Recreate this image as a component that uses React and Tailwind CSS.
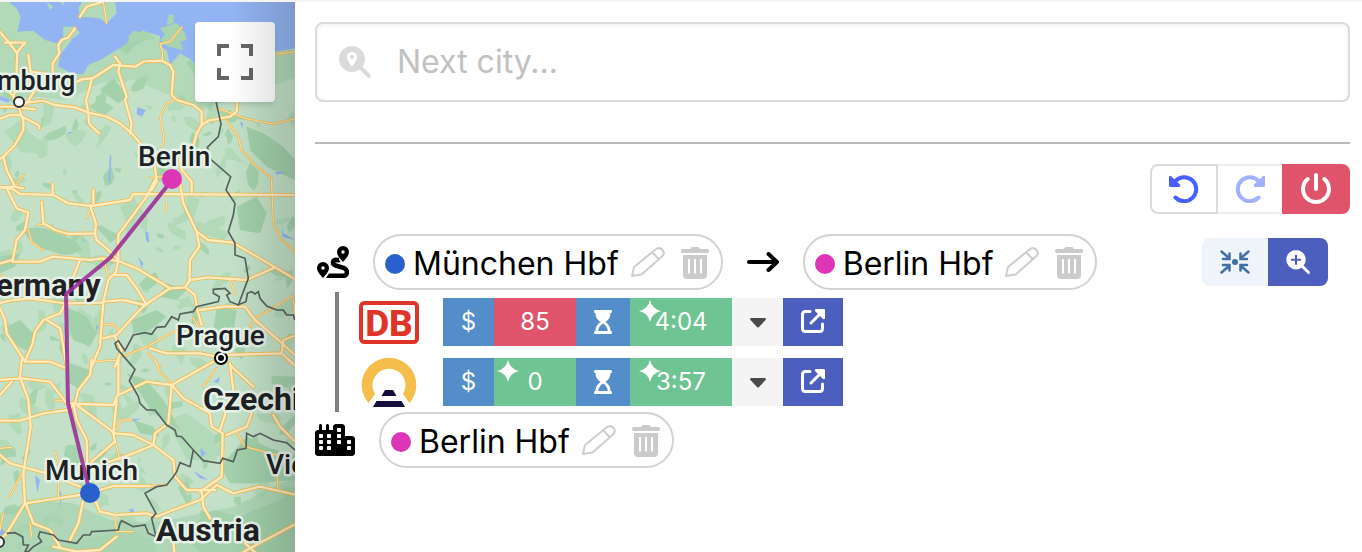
import React from 'react';
import { FaCity, FaPowerOff, FaMagnifyingGlassLocation } from 'react-icons/fa6';

const ROADS = [
  {
    y: 0,
    major: [
      'M-5 90 L25 125 50 158 75 128 15 128', 'M52 158 L50 200 50 260 40 290 57 320', 'M-5 250 L20 265 57 310',
      'M85 165 L92 215 140 222', 'M158 215 L158 190 178 160 175 135 185 120 205 112 225 85',
      'M110 262 L80 310 57 320', 'M-5 320 L30 320 105 328', 'M-5 358 L30 345 57 345 115 375 118 385',
      'M57 325 L70 360 70 390 45 435 10 470 -5 480', 'M10 470 L20 510 45 560',
      'M57 310 L130 302 165 315 225 322 265 338 320 350 360 370 395 400 430 440 465 500 470 545 455 570',
      'M225 248 L245 238 280 234 340 195 405 200 430 185 485 182 510 195 520 215 515 285 530 300 580 315 605 335 605 370',
      'M275 235 L270 260 258 300 265 340 268 372 297 400',
      'M345 170 L360 190 355 215 380 290 375 300 395 370 390 400',
      'M605 375 L590 400 580 440 540 480 545 510 575 545 575 575', 'M605 375 L625 362 690 350 710 335 712 305',
      'M240 50 L260 20 310 5', 'M-5 562 L40 560 70 565',
    ],
    minor: [
      'M520 300 L500 310 480 350 492 410 488 440', 'M487 182 L488 155 480 132 510 125 545 82', 'M655 325 L735 355 820 372 890 355',
      'M680 360 L715 410 725 450 760 490 815 535 815 570', 'M310 5 L320 70', 'M830 162 L890 155', 'M45 560 L72 525', 'M450 532 L490 530',
    ],
  },
  {
    y: 540,
    major: [
      'M-5 20 L40 28 60 42 160 45 205 70 275 78 390 60 400 42 885 45', 'M158 12 L158 45',
      'M20 25 L50 85 85 98 75 150 50 180 38 240 0 250', 'M38 245 L120 245 158 230 270 240 310 235 360 245 410 265 510 325 555 322 570 300 625 292 740 300 825 262',
      'M125 65 L130 130 165 150 205 162 285 160 288 132 270 75', 'M280 30 L280 70', 'M285 160 L290 180 320 205 355 240 348 275 325 300 310 365 305 430 300 500 275 560',
      'M465 0 L440 50 355 165 355 240', 'M540 10 L550 70 590 155 598 200 570 240 568 305', 'M590 155 L625 180 700 188 825 262 890 300',
      'M310 365 L370 360 435 375 510 325', 'M435 375 L400 410 350 465 310 475', 'M345 285 L380 285 410 325 425 350 440 375',
      'M-5 370 L30 362 90 355 195 370 310 368', 'M195 372 L180 400 130 420 105 455 98 490 75 545', 'M140 420 L180 445 190 500 200 560',
      'M0 385 L15 420 20 460 75 545 150 545 200 565', 'M240 240 L220 290', 'M560 325 L585 345 592 390 605 435', 'M600 390 L670 380 735 380 765 420 835 480 890 530',
      'M450 505 L500 520 600 520 650 530', 'M675 525 L845 520 890 560', 'M845 520 L850 480 890 465', 'M345 470 L365 510 345 560',
    ],
    minor: [
      'M85 150 L95 185 130 210', 'M112 135 L140 132', 'M815 0 L820 130 840 175 885 215', 'M690 300 L705 345', 'M310 432 L345 435 360 460', 'M370 530 L440 500 530 450',
      'M275 545 L360 540', 'M445 520 L480 560', 'M765 415 L850 365 885 345', 'M880 360 L885 400', 'M500 70 L498 95', 'M260 115 L275 75', 'M580 415 L610 470', 'M55 315 L5 285',
      'M765 420 L720 480', 'M310 235 L325 290 345 285',
    ],
  },
  {
    y: 1080,
    major: [
      'M-5 60 L65 55 150 65 200 130 240 132 340 135 355 100 355 0', 'M65 0 L60 50 85 120 92 200 70 340 75 430 20 520 -5 545', 'M0 105 L35 65',
      'M-5 182 L60 182 130 160 205 150 220 135', 'M275 0 L270 45 235 90 225 130', 'M220 130 L230 180 260 240 262 330', 'M230 135 L345 220 400 225 460 255 520 300 525 350 560 390 645 390',
      'M350 120 L340 220 345 245 275 305', 'M460 255 L400 280 300 315', 'M355 105 L440 65 515 75 640 5', 'M515 75 L505 190 465 220 460 255',
      'M520 80 L550 115 630 160 635 200 668 220 665 350 600 395', 'M690 10 L700 90 660 210', 'M735 110 L755 160 740 200 680 225', 'M690 15 L760 80',
      'M75 430 L240 405 300 390 340 378 450 378', 'M75 425 L100 490 150 510 180 560', 'M250 420 L235 490 210 540', 'M285 420 L300 455 345 465 440 460 470 470 520 450 600 420 650 375 700 400 780 380 890 405',
      'M605 395 L610 440 630 475', 'M-5 280 L30 310 140 340 240 380', 'M890 490 L750 565 690 600', 'M735 550 L780 590', 'M520 545 L525 600', 'M820 165 L840 200 890 250', 'M160 560 L230 575 300 570 350 530',
    ],
    minor: [
      'M165 275 L175 310 175 410', 'M65 340 L30 410', 'M345 240 L360 300', 'M340 220 L365 180 395 180', 'M465 0 L480 35 520 75', 'M610 80 L650 25', 'M710 215 L735 260 830 285',
      'M830 340 L835 390', 'M90 490 L95 530', 'M0 265 L35 262', 'M860 0 L885 20', 'M10 460 L0 510', 'M165 120 L200 125', 'M350 515 L400 515', 'M345 468 L350 515', 'M450 378 L500 375',
    ],
  },
];

const BORDERS = [
  'M648 305 L663 372 655 410 622 442 632 478 692 530 678 570 705 610 700 645 685 695 705 730 705 765 735 775 745 835 715 915 690 905 680 885 690 880 675 865 640 868 640 880 658 890 655 905 590 920 580 935 540 942 535 960 515 950 495 980 470 982 455 1003 435 998 400 1005 375 1052 355 1022 345 1030 350 1045 405 1108 388 1142 415 1190 420 1210 440 1230 465 1230 500 1275 525 1290 530 1308 545 1310 580 1350 610 1382 660 1390 668 1375 700 1385 712 1350 738 1345 740 1300 760 1310 780 1300 820 1320 860 1328 885 1350',
  'M580 1350 L570 1400 540 1388 530 1415 520 1430 500 1455 470 1460 435 1480 468 1540 455 1555 468 1610 445 1600 435 1575 400 1580 365 1562 360 1570 355 1590 275 1595 270 1605 250 1605 230 1630 175 1620 160 1605 120 1595 115 1610 125 1625 100 1640 85 1655 75 1655 85 1635 70 1635 68 1610 45 1598 20 1600',
  'M712 915 L738 905 742 880 755 875 765 882 775 875 780 895 800 918 830 930 850 930 860 945 880 945 885 960',
];

const DARK = [
  'M70 690 Q120 670 170 700 Q230 715 245 750 Q205 775 160 755 Q90 740 70 690Z', 'M300 270 L340 235 385 290 355 310Z', 'M340 130 L440 92 450 110 400 140 380 165Z',
  'M15 395 L60 360 90 400 150 440 110 460 60 455Z', 'M0 770 L60 760 45 800 0 820Z', 'M600 150 L640 140 650 300 610 260 560 190Z', 'M740 380 L790 400 850 440 885 480 885 540 800 500 750 450Z',
  'M560 580 L600 600 580 660 650 680 690 700 670 720 600 700 560 650Z', 'M200 920 L260 950 290 1000 270 1040 220 1020 200 960Z', 'M395 960 L470 930 500 950 450 990 400 1000Z',
  'M650 920 L710 930 700 1000 640 990Z', 'M500 1260 L560 1240 640 1300 650 1380 560 1380Z', 'M660 1400 L740 1310 800 1340 885 1370 885 1440 760 1450 690 1450Z', 'M380 1120 L440 1140 490 1200 540 1290 460 1240Z',
  'M540 1600 L640 1530 720 1550 885 1480 885 1656 600 1656Z', 'M120 1640 L250 1620 380 1590 460 1620 470 1656 100 1656Z', 'M20 980 L60 960 110 1010 90 1060 40 1030Z', 'M400 1260 L460 1280 480 1310 420 1300Z',
  'M710 620 L770 590 800 640 780 700 720 690Z', 'M360 620 L400 590 430 640 390 690Z', 'M500 850 L560 870 530 900 480 890Z', 'M210 1090 L270 1110 240 1170 210 1150Z',
];

const WATER = [
  'M412 322 L438 330 425 350 410 342Z', 'M330 462 L334 470 330 555 325 540Z', 'M435 690 L445 700 448 730 438 720Z', 'M415 770 L430 790 425 805Z', 'M288 975 L296 980 290 995Z',
  'M600 1345 L618 1360 605 1370Z', 'M580 1412 L625 1440 600 1435Z', 'M385 1530 L400 1525 402 1542Z', 'M105 1425 L120 1440 112 1480Z', 'M178 1470 L184 1480 182 1530Z', 'M0 1580 L15 1595 10 1608 0 1605Z', 'M395 1258 L425 1255 400 1265Z',
  'M720 365 L730 370 726 385Z', 'M203 396 L225 397 205 401Z', 'M0 288 L30 300 25 308 0 300Z', 'M845 670 L850 700 885 720 848 710Z', 'M640 1145 L660 1130 655 1150Z', 'M825 515 L858 517 830 524Z',
];

function makePatches(count) {
  let seed = 41;
  const rnd = () => {
    seed = (seed * 16807) % 2147483647;
    return seed / 2147483647;
  };
  const out = [];
  for (let i = 0; i < count; i += 1) {
    const cx = rnd() * 885;
    const cy = 230 + rnd() * 1420;
    const size = 8 + rnd() * 28;
    const angle = rnd() * 3;
    const points = [];
    for (let k = 0; k < 7; k += 1) {
      const a = (k / 7) * Math.PI * 2;
      const r = size * (0.4 + rnd() * 0.8);
      const px = Math.cos(a) * r * 1.4;
      const py = Math.sin(a) * r * 0.7;
      points.push(`${Math.round(cx + px * Math.cos(angle) - py * Math.sin(angle))},${Math.round(cy + px * Math.sin(angle) + py * Math.cos(angle))}`);
    }
    out.push({ points: points.join(' '), fill: i % 5 < 3 ? '#b2dab9' : '#a5d3ae' });
  }
  return out;
}

const PATCHES = makePatches(200);

const LABELS = [
  { text: 'mburg', x: -3, y: 90, size: 27, weight: 500 },
  { text: 'Berlin', x: 138, y: 166, size: 28, weight: 500 },
  { text: 'ermany', x: -4, y: 296, size: 31, weight: 700 },
  { text: 'Prague', x: 176, y: 345, size: 28, weight: 500 },
  { text: 'Czechia', x: 203, y: 410, size: 32, weight: 700 },
  { text: 'Munich', x: 45, y: 480, size: 28, weight: 500 },
  { text: 'Vienna', x: 266, y: 474, size: 28, weight: 500 },
  { text: 'Austria', x: 156, y: 541, size: 32, weight: 700 },
];

function RoadLayer({ kind, width, color }) {
  return ROADS.map((s) => (
    <g key={s.y} transform={`translate(0 ${s.y})`} fill="none" stroke={color} strokeWidth={width} strokeLinejoin="round" strokeLinecap="round">
      {s[kind].map((d) => <path key={d} d={d} />)}
    </g>
  ));
}

function MapPanel() {
  return (
    <section aria-label="Map" className="relative w-[295px] shrink-0 overflow-hidden bg-[#c3e1c8]">
      <svg viewBox="0 2 295 550" preserveAspectRatio="xMidYMin slice" className="block h-full w-full">
        <g transform="scale(0.333333)">
          <path d="M0 0 H885 V235 L600 330 520 290 400 240 300 250 200 300 120 290 0 300Z" fill="#b2dab9" />
          {PATCHES.map((p) => <polygon key={p.points} points={p.points} fill={p.fill} />)}
          {DARK.map((d, i) => <path key={d} d={d} fill={i % 4 === 3 ? '#b2dab9' : '#a2d1ab'} />)}
          <path d="M0 1540 L100 1500 220 1510 330 1560 460 1570 700 1520 885 1430 V1656 H0Z" fill="#a2d1ab" opacity=".6" />
          <path d="M20 0 L50 25 62 50 52 95 100 92 135 120 170 130 195 118 215 120 180 165 175 200 220 222 250 222 265 195 300 180 350 150 380 130 390 108 430 92 480 108 478 138 500 150 510 195 540 160 575 180 600 210 600 140 820 155 885 145 V0 H345 L350 40 320 70 300 55 240 50 235 25 250 0Z" fill="#93b4f3" />
          <path d="M140 5 L160 20 150 30Z M172 0 L195 0 190 15Z M190 80 L225 80 240 100 205 125 190 110Z" fill="#b2dab9" />
          <path d="M385 110 L400 92 445 100 470 118 430 120 395 130Z M505 45 L522 43 520 68 500 75Z M480 85 L530 68 555 100 560 120 540 125 550 150 505 140 480 120 495 105Z" fill="#a8d5b0" />
          {WATER.map((d) => <path key={d} d={d} fill="#93b4f3" />)}
          <RoadLayer kind="minor" width={7} color="#edba55" />
          <RoadLayer kind="major" width={12} color="#edba55" />
          <RoadLayer kind="minor" width={3} color="#ffe9b5" />
          <RoadLayer kind="major" width={7} color="#ffebc0" />
          {BORDERS.map((d) => <path key={d} d={d} fill="none" stroke="#56625d" strokeWidth="5" />)}
        </g>
        <circle cx="19" cy="102" r="5" fill="#fff" stroke="#333" strokeWidth="2" />
        <circle cx="-1" cy="542" r="5" fill="#fff" stroke="#333" strokeWidth="2" />
        <circle cx="221" cy="358" r="6" fill="#fff" stroke="#000" strokeWidth="2" />
        <circle cx="221" cy="358" r="3" fill="#000" />
        {LABELS.map((l) => (
          <text key={l.text} x={l.x} y={l.y} fontSize={l.size} fontWeight={l.weight} fontFamily="Roboto, sans-serif" fill="#202124" stroke="#e6f2e8" strokeWidth="5" strokeLinejoin="round" paintOrder="stroke">{l.text}</text>
        ))}
        <path d="M172 180 L110 258 66 294 68 403 90 493" fill="none" stroke="#9b2b96" strokeOpacity=".88" strokeWidth="4" strokeLinejoin="round" />
        <circle cx="172" cy="179" r="10" fill="#dc35b5" />
        <circle cx="90" cy="493" r="10" fill="#2a60cb" />
      </svg>
      <button type="button" aria-label="Toggle fullscreen view" className="absolute top-5 right-5 flex size-20 items-center justify-center rounded-sm bg-white shadow-md">
        <svg viewBox="0 0 36 36" className="size-9" fill="#666">
          <path d="M0 0H12V4H4V12H0Z M24 0H36V12H32V4H24Z M0 24H4V32H12V36H0Z M32 24H36V36H24V32H32Z" />
        </svg>
      </button>
      <div className="pointer-events-none absolute inset-y-0 right-0 w-16 bg-linear-to-r from-black/0 to-black/15" />
    </section>
  );
}

function PencilIcon() {
  return (
    <svg viewBox="0 0 34 30" className="h-[30px] w-[34px]" fill="none" stroke="#cecece" strokeWidth="2" strokeLinejoin="round">
      <path d="M1 29 L3 20 24.500 2.500 Q28.500 -0.500 31.500 3 Q34.500 6.500 31 9.500 L10.500 27.500Z M21.500 5.500 L27.500 12" />
    </svg>
  );
}

function TrashIcon() {
  return (
    <svg viewBox="0 0 28 32" className="h-8 w-7" fill="#cbcbcb">
      <path d="M1.500 2H9L10.500 0H17.500L19 2H26.500Q28 2 28 4T26.500 6H1.500Q0 6 0 4T1.500 2Z" />
      <path fillRule="evenodd" d="M2 8H26V28Q26 32 22 32H6Q2 32 2 28Z M7 12V26.500H9V12Z M13 12V26.500H15V12Z M19 12V26.500H21V12Z" />
    </svg>
  );
}

function CityPill({ name, dot }) {
  return (
    <div className="flex h-14 items-center rounded-full border-2 border-[#d3d3d3] pr-3 pl-2.5">
      <span className={`mt-1 mr-2 size-5 rounded-full ${dot}`} />
      <span className="mt-1 mr-3 text-[32px] leading-10 whitespace-nowrap text-black">{name}</span>
      <button type="button" aria-label={`Edit ${name}`} className="mr-4"><PencilIcon /></button>
      <button type="button" aria-label={`Remove ${name}`} className="mt-0.5"><TrashIcon /></button>
    </div>
  );
}

function RouteIcon() {
  return (
    <svg viewBox="0 0 32 32" className="size-8 shrink-0">
      <path fillRule="evenodd" d="M26 0A6 6 0 0 1 32 6C32 9.500 29 12.500 26 16C23 12.500 20 9.500 20 6A6 6 0 0 1 26 0Z M26 4.300A1.700 1.700 0 1 0 26 7.700A1.700 1.700 0 1 0 26 4.300Z" />
      <path fillRule="evenodd" d="M6 16A6 6 0 0 1 12 22C12 25.500 9 28.500 6 32C3 28.500 0 25.500 0 22A6 6 0 0 1 6 16Z M6 20.300A1.700 1.700 0 1 0 6 23.700A1.700 1.700 0 1 0 6 20.300Z" />
      <path d="M22 14H18.500Q16 14 16 16.500Q16 18.500 18.500 19.500L27 22Q30 23.500 30 26.200Q29.500 29.800 26 29.800H12" fill="none" stroke="#000" strokeWidth="4.500" strokeLinejoin="round" />
      <path d="M20 11.700H18V16.200H24Z M12 27.500L9 32H13Z" />
    </svg>
  );
}

function DbLogo() {
  return (
    <svg viewBox="0 0 60 43" role="img" aria-label="Deutsche Bahn" className="h-[43px] w-15">
      <rect x="2" y="2" width="56" height="39" rx="3.500" fill="#fff" stroke="#df3528" strokeWidth="4" />
      <text x="30" y="35" textAnchor="middle" fontFamily="Roboto, sans-serif" fontWeight="800" fontSize="37" fill="#df3528">DB</text>
    </svg>
  );
}

function TunnelLogo() {
  return (
    <svg viewBox="0 0 56 50" role="img" aria-label="Night train" className="h-[50px] w-14">
      <path d="M7.500 46A27.300 27.300 0 1 1 48.500 46L42 37A16.500 16.500 0 1 0 14 37Z" fill="#f5bd4a" />
      <path d="M24 33H32L35.500 39H20.500Z M15.500 44H40.500L44 50H12Z" fill="#15103a" />
    </svg>
  );
}

function Sparkle({ className }) {
  return (
    <svg viewBox="0 0 22 22" className={`absolute top-0.5 size-[22px] ${className}`} fill="#fff">
      <path d="M11 0Q13 9 22 11Q13 13 11 22Q9 13 0 11Q9 9 11 0Z" />
    </svg>
  );
}

function HourglassIcon() {
  return (
    <svg viewBox="0 0 18 24" className="h-6 w-[18px]" role="img" aria-label="Duration">
      <path fillRule="evenodd" fill="#fff" d="M1 0H17Q18 0 18 1.500T17 3H16.500C16.500 8 14 10 11.500 12C14 14 16.500 16 16.500 21H17Q18 21 18 22.500T17 24H1Q0 24 0 22.500T1 21H1.500C1.500 16 4 14 6.500 12C4 10 1.500 8 1.500 3H1Q0 3 0 1.500T1 0Z M9 13.500C6.500 15 4.500 17.500 4.200 21H13.800C13.500 17.500 11.500 15 9 13.500Z" />
    </svg>
  );
}

function Offer({ logo, provider, price, priceBg, bestPrice, time }) {
  return (
    <li className="flex h-12 items-center">
      <div className="flex w-15 justify-center">{logo}</div>
      <div className="ml-6 flex h-12 text-2xl text-white">
        <span className="flex w-[51px] items-center justify-center bg-[#538ecb]">$</span>
        <span className={`relative flex w-[82px] items-center justify-center ${priceBg}`}>{bestPrice && <Sparkle className="left-[3px]" />}{price}</span>
        <span className="flex w-[54px] items-center justify-center bg-[#538ecb]"><HourglassIcon /></span>
        <span className="relative flex w-[102px] items-center justify-center bg-[#6fc493]"><Sparkle className="left-[9px]" />{time}</span>
        <button type="button" aria-label={`More ${provider} connections`} className="flex w-[51px] items-center justify-center bg-[#f4f4f4]">
          <svg viewBox="0 0 16 10" className="mt-0.5 h-2.5 w-4" fill="#4a4a4a"><path d="M1 0H15Q16 0 16 1.500L9 9Q8 10 7 9L0 1.500Q0 0 1 0Z" /></svg>
        </button>
        <a href="#booking" aria-label={`Open ${provider}`} className="flex w-15 items-center justify-center bg-[#4c5fbf]">
          <svg viewBox="0 0 24 24" className="mb-0.5 size-6" fill="none" stroke="#fff" strokeWidth="3">
            <path d="M9 2.500H4.500Q1.500 2.500 1.500 5.500V19.500Q1.500 22.500 4.500 22.500H18.500Q21.500 22.500 21.500 19.500V15" strokeLinecap="round" />
            <path d="M10 14L21 3" strokeLinecap="round" />
            <path d="M14.500 0H23Q24 0 24 1V9.500Q23 11 21.500 9.500L14.500 2.500Q13 1 14.500 0Z" fill="#fff" stroke="none" />
          </svg>
        </a>
      </div>
    </li>
  );
}

function UndoIcon({ className = '' }) {
  return (
    <svg viewBox="0 0 30 28" className={`h-7 w-[30px] ${className}`}>
      <path d="M6 6.500A12 12 0 1 1 6.500 22.500" fill="none" stroke="currentColor" strokeWidth="4" strokeLinecap="round" />
      <path d="M0 2Q0.500 0 2 1.200L11 9.500Q12 12 9.500 12H1.500Q0 12 0 10.500Z" fill="currentColor" />
    </svg>
  );
}

function CollapseIcon() {
  const arrow = 'M1.500 1.500L9 8M9.500 3.500V9H3';
  return (
    <svg viewBox="0 0 30 24" className="h-6 w-[30px]" fill="none" stroke="#3f6fa5" strokeWidth="2.500" strokeLinecap="round">
      <path d={arrow} />
      <path d={arrow} transform="translate(30 0) scale(-1 1)" />
      <path d={arrow} transform="translate(0 24) scale(1 -1)" />
      <path d={arrow} transform="translate(30 24) scale(-1 -1)" />
      <circle cx="15" cy="12" r="3" fill="#3f6fa5" stroke="none" />
    </svg>
  );
}

function ZoomInIcon() {
  return (
    <svg viewBox="0 0 24 24" className="size-6" fill="none" strokeLinecap="round">
      <circle cx="10" cy="9.700" r="9.700" fill="#fff" />
      <path d="M16 16L22.500 22.500" stroke="#fff" strokeWidth="3" />
      <path d="M10 5.500V14M5.700 9.700H14.300" stroke="#4c5fbf" strokeWidth="2" />
    </svg>
  );
}

export default function App() {
  return (
    <div className="flex min-h-screen border-t-2 border-[#f5f5f5] bg-white font-['Inter',sans-serif]">
      <MapPanel />
      <main className="min-w-0 flex-1 pt-5 pr-3 pl-5">
        <label className="flex h-20 items-center rounded-lg border-2 border-[#dbdbdb] px-[22px] shadow-[inset_0_2px_4px_rgba(10,10,10,0.05)]">
          <FaMagnifyingGlassLocation className="size-8 shrink-0 text-[#dbdbdb]" />
          <input type="text" aria-label="Next city" placeholder="Next city..." className="ml-[26px] min-w-0 flex-1 bg-transparent text-[32px] leading-10 outline-none placeholder:text-[#c1c1c1]" />
        </label>
        <hr className="mt-10 border-t-2 border-[#bababa]" />

        <div className="mt-5 flex h-[50px] justify-end">
          <button type="button" aria-label="Undo" className="flex w-[68px] items-center justify-center rounded-l-lg border-2 border-[#dbdbdb] text-[#4760ff]">
            <UndoIcon />
          </button>
          <button type="button" aria-label="Redo" disabled className="flex w-16 items-center justify-center border-y-2 border-[#ededed] text-[#a3afff]">
            <UndoIcon className="-scale-x-100" />
          </button>
          <button type="button" aria-label="Reset" className="flex w-[68px] items-center justify-center rounded-r-lg bg-[#df546b] text-white">
            <FaPowerOff className="size-8" />
          </button>
        </div>

        <div className="mt-5 flex items-center">
          <div className="flex w-[58px] pl-0.5"><RouteIcon /></div>
          <CityPill name="München Hbf" dot="bg-[#2a60cb]" />
          <svg viewBox="0 0 32 20" className="mx-6 h-5 w-8 shrink-0" fill="none" stroke="#000" strokeWidth="4" strokeLinecap="round" strokeLinejoin="round">
            <path d="M2 10H29M21.500 2L30 10L21.500 18" />
          </svg>
          <CityPill name="Berlin Hbf" dot="bg-[#dc35b5]" />
          <div className="mr-[22px] ml-auto flex h-12 overflow-hidden rounded-lg">
            <button type="button" aria-label="Collapse" className="flex w-[66px] items-center justify-center bg-[#eff4fb]"><CollapseIcon /></button>
            <button type="button" aria-label="Zoom in" className="flex w-15 items-center justify-center bg-[#4c5fbf]"><ZoomInIcon /></button>
          </div>
        </div>

        <ul className="mt-0.5 ml-5 flex flex-col gap-3 border-l-4 border-[#808080] py-1.5 pl-5">
          <Offer provider="Deutsche Bahn" logo={<DbLogo />} price="85" priceBg="bg-[#df546b]" time="4:04" />
          <Offer provider="night train" logo={<TunnelLogo />} price="0" priceBg="bg-[#6fc493]" bestPrice time="3:57" />
        </ul>

        <div className="flex items-center gap-6">
          <FaCity className="h-8 w-10 shrink-0 text-black" />
          <CityPill name="Berlin Hbf" dot="bg-[#dc35b5]" />
        </div>
      </main>
    </div>
  );
}
